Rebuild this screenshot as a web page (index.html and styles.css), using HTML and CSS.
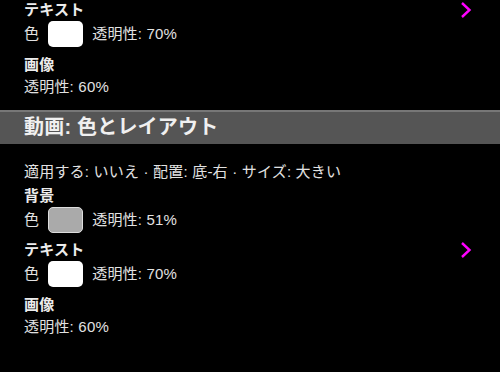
FILE: index.html
```html
<!DOCTYPE html>
<html lang="ja">
<head>
    <meta charset="UTF-8">
    <meta name="viewport" content="width=device-width, initial-scale=1.0">
    <title>動画: 色とレイアウト</title>
    <link rel="stylesheet" href="styles.css">
</head>
<body>
    <div class="settings">
        <div class="group first">
            <div class="label-row">
                <span class="label">テキスト</span>
                <svg class="chevron" width="12" height="18" viewBox="0 0 12 18">
                    <path d="M2 2 L9.5 9 L2 16" fill="none" stroke="#ff00ff" stroke-width="2.4"/>
                </svg>
            </div>
            <div class="color-row">
                <span>色</span>
                <span class="swatch white"></span>
                <span>透明性: 70%</span>
            </div>
            <div class="label-row gap">
                <span class="label">画像</span>
            </div>
            <div class="value">透明性: 60%</div>
        </div>

        <div class="section-header">動画: 色とレイアウト</div>

        <div class="group">
            <div class="summary">適用する: いいえ · 配置: 底-右 · サイズ: 大きい</div>
            <div class="label-row">
                <span class="label">背景</span>
            </div>
            <div class="color-row">
                <span>色</span>
                <span class="swatch gray"></span>
                <span>透明性: 51%</span>
            </div>
            <div class="label-row gap-small">
                <span class="label">テキスト</span>
                <svg class="chevron" width="12" height="18" viewBox="0 0 12 18">
                    <path d="M2 2 L9.5 9 L2 16" fill="none" stroke="#ff00ff" stroke-width="2.4"/>
                </svg>
            </div>
            <div class="color-row">
                <span>色</span>
                <span class="swatch white"></span>
                <span>透明性: 70%</span>
            </div>
            <div class="label-row gap">
                <span class="label">画像</span>
            </div>
            <div class="value">透明性: 60%</div>
        </div>
    </div>
</body>
</html>
```

FILE: styles.css
```css
* {
    margin: 0;
    padding: 0;
    box-sizing: border-box;
}

body {
    background-color: #000;
    color: #e2e2e2;
    font-family: "Liberation Sans", "Noto Sans CJK JP", sans-serif;
    font-size: 15px;
    line-height: 20px;
    letter-spacing: 0.2px;
}

.settings {
    width: 500px;
    height: 372px;
    overflow: hidden;
}

.group {
    padding-left: 24px;
}

.first {
    padding-bottom: 13px;
}

.label-row {
    display: flex;
    justify-content: space-between;
    align-items: center;
    padding-right: 28px;
    height: 20px;
}

.label {
    font-weight: 600;
    color: #ececec;
}

.gap {
    margin-top: 8px;
}

.gap-small {
    margin-top: 7px;
}

.chevron {
    display: block;
}

.color-row {
    display: flex;
    align-items: center;
    margin-top: 1px;
    height: 26px;
}

.swatch {
    width: 35px;
    height: 26px;
    border-radius: 5px;
    margin-left: 9px;
    margin-right: 9px;
}

.swatch.white {
    background-color: #fff;
}

.swatch.gray {
    background-color: #aaa;
    border: 1.5px solid #ddd;
}

.value {
    height: 20px;
    margin-top: 2px;
}

.section-header {
    height: 34px;
    background-color: #555;
    border-top: 2px solid #777;
    color: #f0f0f0;
    font-size: 20px;
    font-weight: 600;
    line-height: 31px;
    padding-left: 24px;
}

.summary {
    height: 20px;
    margin-top: 18px;
    margin-bottom: 4px;
}
```
